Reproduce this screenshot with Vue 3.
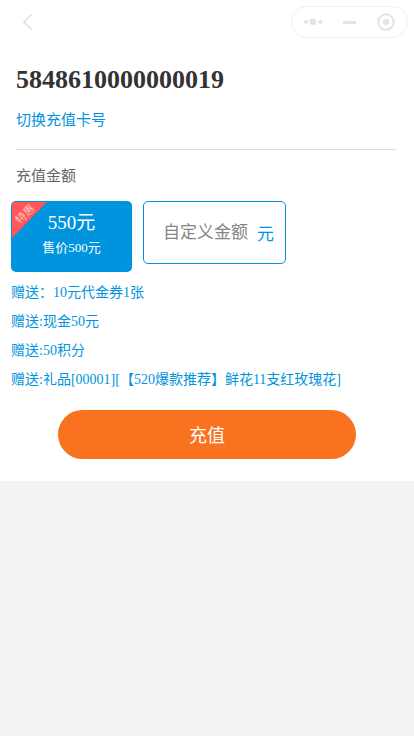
<script setup>
const cardNumber = '5848610000000019'
const gifts = [
  '赠送：10元代金券1张',
  '赠送:现金50元',
  '赠送:50积分',
  '赠送:礼品[00001][【520爆款推荐】鲜花11支红玫瑰花]',
]
</script>

<template>
  <main class="page">
    <section class="sheet">
      <header class="nav">
        <svg class="back" width="12" height="18" viewBox="0 0 12 18"><path d="M9.800 1.200 1.800 9l8 7.800" /></svg>
        <div class="capsule">
          <svg width="117" height="32" viewBox="0 0 117 32">
            <circle cx="15" cy="16" r="2" />
            <circle cx="22" cy="15.900" r="3.300" />
            <circle cx="29.300" cy="16" r="2" />
            <rect x="51.500" y="15" width="14" height="3" rx="1.500" />
            <circle class="ring" cx="95" cy="16" r="7.700" />
            <circle cx="95" cy="16" r="3.200" />
          </svg>
        </div>
      </header>

      <div class="account">
        <h1 class="number">{{ cardNumber }}</h1>
        <a class="switch">切换充值卡号</a>
      </div>

      <h2 class="label">充值金额</h2>
      <div class="amounts">
        <div class="plan">
          <span class="ribbon"><span class="ribbon-text">特惠</span></span>
          <span class="value">550元</span>
          <span class="price">售价500元</span>
        </div>
        <div class="custom">
          <span class="placeholder">自定义金额</span>
          <span class="unit">元</span>
        </div>
      </div>

      <ul class="gifts">
        <li v-for="gift in gifts" :key="gift">{{ gift }}</li>
      </ul>
      <button class="submit">充值</button>
    </section>
  </main>
</template>

<style>
body {
  background: #f3f3f3;
}
</style>

<style scoped>
.page {
  min-height: 736px;
  background: #f3f3f3;
  font-family: "Liberation Serif", "Noto Sans CJK SC", serif;
  font-weight: 400;
  text-spacing-trim: space-all;
}
.sheet {
  box-sizing: border-box;
  height: 481px;
  background: #fff;
  overflow: hidden;
}
.nav {
  display: flex;
  justify-content: space-between;
  align-items: center;
  height: 44px;
  padding: 0 6px 0 22px;
}
.back {
  fill: none;
  stroke: #dedede;
  stroke-width: 1.5;
}
.capsule {
  box-sizing: border-box;
  width: 117px;
  height: 32px;
  border: 1px solid #f0f0f0;
  border-radius: 16px;
}
.capsule svg {
  display: block;
  margin: -1px;
  fill: #e4e4e4;
}
.capsule .ring {
  fill: none;
  stroke: #e4e4e4;
  stroke-width: 2;
}
.account {
  box-sizing: border-box;
  height: 106px;
  margin: 0 18px 0 16px;
  padding-top: 20px;
  border-bottom: 1px solid #ddd;
}
.number {
  margin: 0;
  color: #333;
  font-size: 26px;
  line-height: 32px;
  font-weight: 700;
}
.switch {
  display: block;
  margin-top: 13px;
  color: #0094de;
  font-size: 15px;
  line-height: 22px;
}
.label {
  margin: 15px 0 0 16px;
  color: #666;
  font-size: 15px;
  line-height: 22px;
  font-weight: 400;
}
.amounts {
  display: flex;
  align-items: flex-start;
  gap: 11px;
  margin: 14px 0 0 11px;
}
.plan {
  position: relative;
  display: flex;
  flex-direction: column;
  align-items: center;
  box-sizing: border-box;
  width: 121px;
  height: 71px;
  padding-top: 9px;
  border-radius: 5px;
  background: #0094de;
  color: #fff;
  overflow: hidden;
}
.ribbon {
  position: absolute;
  top: 1px;
  left: 1px;
  width: 35px;
  height: 36px;
  background: #ff5757;
  clip-path: polygon(0 0, 100% 0, 0 100%);
}
.ribbon-text {
  position: absolute;
  top: 5px;
  left: 1px;
  width: 24px;
  text-align: center;
  font-size: 11px;
  line-height: 14px;
  font-weight: 300;
  opacity: 0.85;
  transform: rotate(-45deg);
}
.value {
  font-size: 19px;
  line-height: 26px;
}
.price {
  font-size: 13px;
  line-height: 20px;
  margin-top: 2px;
}
.custom {
  display: flex;
  align-items: center;
  box-sizing: border-box;
  width: 143px;
  height: 63px;
  padding-left: 19px;
  border: 1px solid #0094de;
  border-radius: 5px;
}
.placeholder {
  width: 94px;
  margin-top: -4px;
  color: #858585;
  font-size: 17px;
}
.unit {
  color: #0094de;
  font-size: 17px;
}
.gifts {
  margin: 6px 0 0 11px;
  padding: 0;
  list-style: none;
  color: #0094de;
  font-size: 14px;
  line-height: 29px;
}
.submit {
  display: block;
  width: 298px;
  height: 49px;
  margin: 16px auto 0 58px;
  padding: 0 0 2px;
  border: 0;
  border-radius: 25px;
  background: #f97220;
  color: #fff;
  font: inherit;
  font-size: 18px;
}
</style>
